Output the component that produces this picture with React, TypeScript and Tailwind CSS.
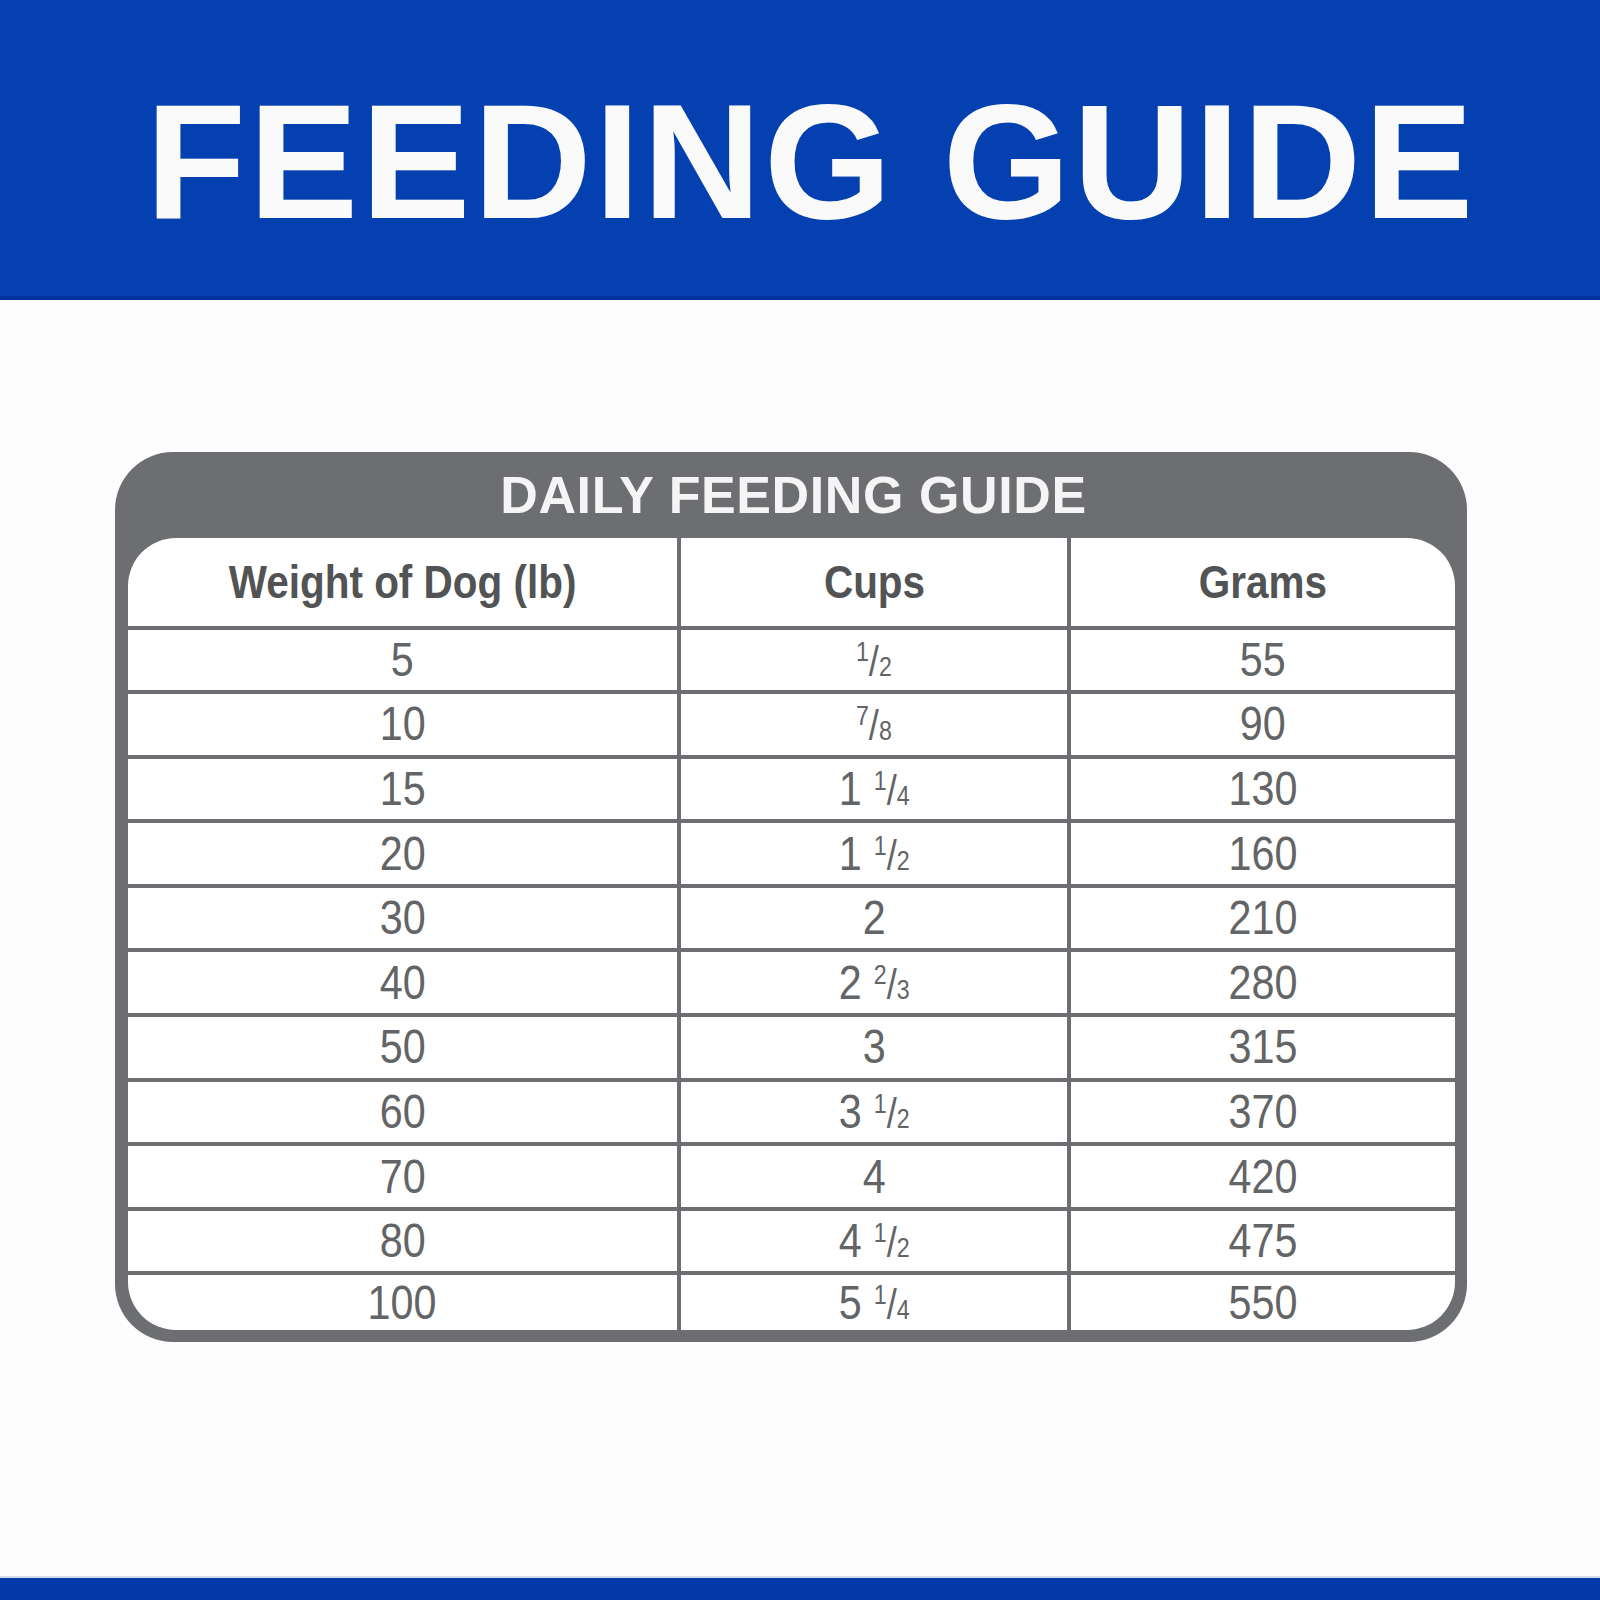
import React from "react";

type Cup = { whole?: string; num?: string; den?: string };

const rows: { lb: string; cups: Cup; grams: string }[] = [
  { lb: "5", cups: { num: "1", den: "2" }, grams: "55" },
  { lb: "10", cups: { num: "7", den: "8" }, grams: "90" },
  { lb: "15", cups: { whole: "1", num: "1", den: "4" }, grams: "130" },
  { lb: "20", cups: { whole: "1", num: "1", den: "2" }, grams: "160" },
  { lb: "30", cups: { whole: "2" }, grams: "210" },
  { lb: "40", cups: { whole: "2", num: "2", den: "3" }, grams: "280" },
  { lb: "50", cups: { whole: "3" }, grams: "315" },
  { lb: "60", cups: { whole: "3", num: "1", den: "2" }, grams: "370" },
  { lb: "70", cups: { whole: "4" }, grams: "420" },
  { lb: "80", cups: { whole: "4", num: "1", den: "2" }, grams: "475" },
  { lb: "100", cups: { whole: "5", num: "1", den: "4" }, grams: "550" },
];

function CupValue({ cup }: { cup: Cup }) {
  return (
    <span className="inline-flex items-baseline">
      {cup.whole && <span>{cup.whole}</span>}
      {cup.whole && cup.num && <span className="w-[14px]" />}
      {cup.num && (
        <span className="inline-flex items-baseline">
          <span className="text-[27px] relative -top-[15px]">{cup.num}</span>
          <span className="text-[42px] font-light">/</span>
          <span className="text-[27px]">{cup.den}</span>
        </span>
      )}
    </span>
  );
}

function Cell({ children, head, last }: { children: React.ReactNode; head?: boolean; last?: boolean }) {
  return (
    <div
      className={
        "bg-white flex items-center justify-center " +
        (head ? "h-[87.5px]" : last ? "h-[54.5px]" : "h-[60.6px]")
      }
    >
      <span
        className={
          "inline-block leading-none " +
          (head
            ? "text-[46px] font-bold text-[#525355] scale-x-[0.88]"
            : "text-[48px] text-[#636466] scale-x-[0.86]")
        }
      >
        {children}
      </span>
    </div>
  );
}

export default function App() {
  return (
    <div className="w-[1600px] h-[1600px] bg-[#fdfdfd] flex flex-col font-['Liberation_Sans',Arial,sans-serif]">
      {/* Blue banner */}
      <header className="h-[300px] bg-[#0540b0] border-b-4 border-[#0333a0] flex justify-center pt-[80px] pl-[22px]">
        <h1 className="text-[164px] leading-none font-bold text-[#fafafa] tracking-[2.8px]">FEEDING GUIDE</h1>
      </header>

      {/* Table */}
      <div className="flex-1">
        <div className="ml-[115px] mt-[152px] w-[1352px] rounded-[58px] bg-[#6d6e71] pl-[13px] pr-[12px] pb-[12px]">
          <div className="h-[86px] flex items-center justify-center pl-[4px]">
            <span className="text-[52px] leading-none font-bold text-[#f5f5f5] tracking-[0.6px]">DAILY FEEDING GUIDE</span>
          </div>
          <div className="rounded-[48px] overflow-hidden grid grid-cols-[549px_386px_384px] gap-[4px]">
            <Cell head>Weight of Dog (lb)</Cell>
            <Cell head>Cups</Cell>
            <Cell head>Grams</Cell>
            {rows.map((r, i) => {
              const last = i === rows.length - 1;
              return (
                <React.Fragment key={r.lb}>
                  <Cell last={last}>{r.lb}</Cell>
                  <Cell last={last}>
                    <CupValue cup={r.cups} />
                  </Cell>
                  <Cell last={last}>{r.grams}</Cell>
                </React.Fragment>
              );
            })}
          </div>
        </div>
      </div>

      {/* Bottom bar */}
      <div className="h-[2px] bg-[#d6dbe8]" />
      <div className="h-[22px] bg-[#0538a8]" />
    </div>
  );
}
